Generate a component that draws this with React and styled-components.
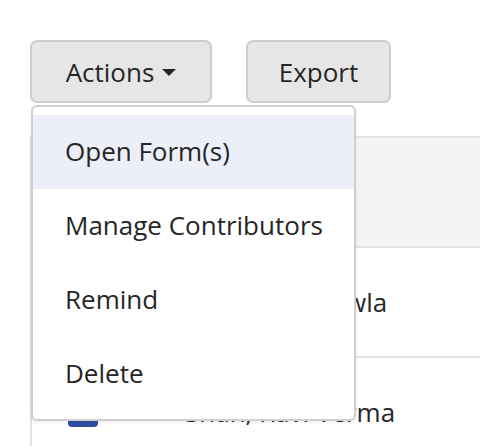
import styled, { createGlobalStyle } from 'styled-components';

const GlobalStyle = createGlobalStyle`
    html, body {
        margin: 0;
        padding: 0;
        background: #fff;
        overflow: hidden;
    }
    body {
        font-family: 'Open Sans', 'Liberation Sans', sans-serif;
        color: #262626;
    }
`;

const Page = styled.div`
    position: relative;
    padding: 40px 0 0 30px;
    width: 480px;
    height: 446px;
    box-sizing: border-box;
`;

const Toolbar = styled.div`
    display: flex;
    gap: 34px;
`;

const ToolButton = styled.button`
    display: flex;
    align-items: center;
    justify-content: center;
    gap: 8px;
    width: ${(p) => p.$width}px;
    height: 63px;
    box-sizing: border-box;
    background: #e6e6e6;
    border: 2px solid #cdcdcd;
    border-radius: 7px;
    font-family: inherit;
    font-size: 26px;
    color: #262626;
    padding: 0;
`;

const Caret = styled.span`
    display: inline-block;
    width: 0;
    height: 0;
    border-left: 7px solid transparent;
    border-right: 7px solid transparent;
    border-top: 7px solid #262626;
    margin-top: 2px;
`;

const Table = styled.div`
    margin-top: 33px;
    border-top: 2px solid #e2e2e2;
    border-left: 2px solid #e2e2e2;
`;

const Row = styled.div`
    display: flex;
    align-items: center;
    height: 108px;
    background: ${(p) => (p.$head ? '#f4f4f4' : '#fff')};
    border-bottom: 2px solid #e2e2e2;
`;

const Check = styled.span`
    flex: none;
    width: 30px;
    height: 30px;
    margin-left: 36px;
    border-radius: 4px;
    background: #2c4f9f;
`;

const Name = styled.span`
    margin-left: 87px;
    font-size: 26px;
    white-space: nowrap;
`;

const Menu = styled.ul`
    position: absolute;
    top: 105px;
    left: 31px;
    width: 325px;
    box-sizing: border-box;
    margin: 0;
    padding: 8px 0;
    list-style: none;
    background: #fff;
    border: 2px solid #cfcfcf;
    border-radius: 6px;
    box-shadow: 0 2px 4px rgba(0, 0, 0, 0.06);
`;

const MenuItem = styled.li`
    display: flex;
    align-items: center;
    height: 74px;
    padding-left: 32px;
    padding-bottom: 3px;
    box-sizing: border-box;
    font-size: 26px;
    color: #262626;
    background: ${(p) => (p.$active ? '#eceef8' : 'transparent')};
`;

const items = ['Open Form(s)', 'Manage Contributors', 'Remind', 'Delete'];

const App = () => {
    return (
        <Page>
            <GlobalStyle />
            <Toolbar>
                <ToolButton $width={182}>
                    Actions <Caret />
                </ToolButton>
                <ToolButton $width={145}>Export</ToolButton>
            </Toolbar>
            <Table>
                <Row $head>
                    <Check />
                </Row>
                <Row>
                    <Check />
                    <Name>Bose, Lia Chawla</Name>
                </Row>
                <Row>
                    <Check />
                    <Name>Shah, Ravi Verma</Name>
                </Row>
            </Table>
            <Menu>
                {items.map((item, i) => (
                    <MenuItem key={item} $active={i === 0}>
                        {item}
                    </MenuItem>
                ))}
            </Menu>
        </Page>
    );
};

export default App;
